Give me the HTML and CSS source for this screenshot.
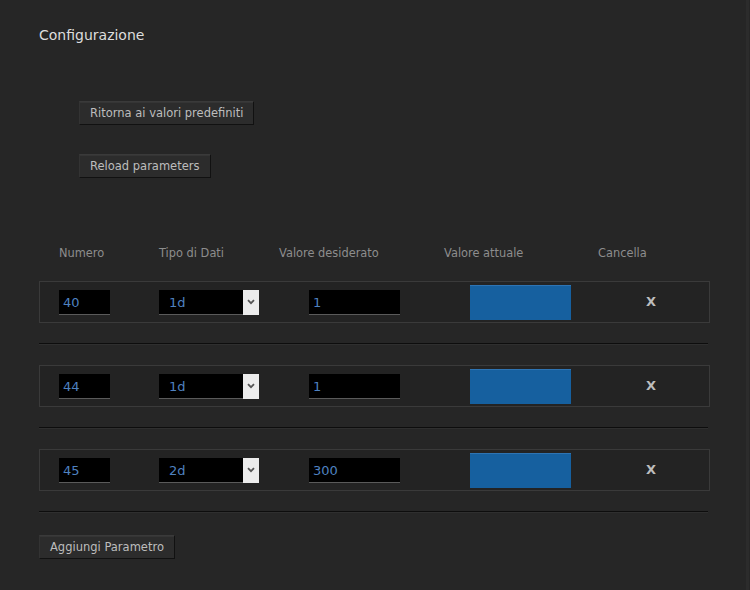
FILE: index.html
```html
<!DOCTYPE html>
<html lang="it">
<head>
<meta charset="utf-8">
<title>Configurazione</title>
<link rel="stylesheet" href="styles.css">
</head>
<body>
<div class="page">
  <h1 class="title">Configurazione</h1>
  <div class="actions">
    <button class="btn">Ritorna ai valori predefiniti</button>
    <button class="btn">Reload parameters</button>
  </div>

  <div class="heads">
    <span>Numero</span>
    <span>Tipo di Dati</span>
    <span>Valore desiderato</span>
    <span>Valore attuale</span>
    <span>Cancella</span>
  </div>

  <div class="param">
    <div class="row">
      <div class="field num">40</div>
      <div class="select"><span class="sel-text">1d</span><span class="arrow"><svg width="8" height="6" viewBox="0 0 8 6"><path d="M1 1.2 L4 4.2 L7 1.2" fill="none" stroke="#555" stroke-width="1.8"/></svg></span></div>
      <div class="field val">1</div>
      <div class="current"></div>
      <div class="del">X</div>
    </div>
    <div class="sep"></div>
  </div>

  <div class="param">
    <div class="row">
      <div class="field num">44</div>
      <div class="select"><span class="sel-text">1d</span><span class="arrow"><svg width="8" height="6" viewBox="0 0 8 6"><path d="M1 1.2 L4 4.2 L7 1.2" fill="none" stroke="#555" stroke-width="1.8"/></svg></span></div>
      <div class="field val">1</div>
      <div class="current"></div>
      <div class="del">X</div>
    </div>
    <div class="sep"></div>
  </div>

  <div class="param">
    <div class="row">
      <div class="field num">45</div>
      <div class="select"><span class="sel-text">2d</span><span class="arrow"><svg width="8" height="6" viewBox="0 0 8 6"><path d="M1 1.2 L4 4.2 L7 1.2" fill="none" stroke="#555" stroke-width="1.8"/></svg></span></div>
      <div class="field val">300</div>
      <div class="current"></div>
      <div class="del">X</div>
    </div>
    <div class="sep"></div>
  </div>

  <button class="btn add">Aggiungi Parametro</button>
</div>
</body>
</html>
```

FILE: styles.css
```css
html, body {
  margin: 0;
  padding: 0;
  background: #262626;
}
body {
  font-family: "DejaVu Sans", sans-serif;
  color: #bbb;
}
.page {
  width: 749px;
  height: 590px;
  box-sizing: border-box;
  padding: 27px 0 0 39px;
  border-right: 3px solid #2c2c2c;
}
.title {
  margin: 0;
  font-size: 14px;
  font-weight: normal;
  line-height: 17px;
  color: #ddd;
}
.actions {
  display: flex;
  flex-direction: column;
  align-items: flex-start;
  gap: 29px;
  margin: 57px 0 0 40px;
}
.btn {
  display: block;
  height: 24px;
  padding: 0 10px;
  background: #2c2c2c;
  border: 1px solid #111;
  border-top-color: #3a3a3a;
  border-left-color: #333;
  box-shadow: inset 0 1px 0 #353535;
  color: #bdbdbd;
  font-family: "DejaVu Sans", sans-serif;
  font-size: 11.5px;
  line-height: 20px;
}
.heads {
  display: grid;
  grid-template-columns: 100px 120px 165px 154px auto;
  padding-left: 20px;
  margin-top: 68px;
  font-size: 11.4px;
  line-height: 14px;
  color: #8d8d8d;
}
.param {
  margin-top: 21px;
  width: 671px;
}
.param + .param {
  margin-top: 20px;
}
.row {
  display: grid;
  grid-template-columns: 100px 150px 161px 178px auto;
  align-items: center;
  height: 40px;
  padding-left: 19px;
  border: 1px solid #3a3a3a;
  background: #232323;
}
.field {
  height: 24px;
  background: #000;
  border-bottom: 1px solid #5a5a5a;
  color: #4f82c0;
  font-size: 13px;
  line-height: 25px;
  padding-left: 4px;
}
.num {
  width: 47px;
}
.val {
  width: 87px;
}
.select {
  display: flex;
  width: 100px;
  height: 24px;
  background: #000;
  border-bottom: 1px solid #5a5a5a;
}
.sel-text {
  flex: 1;
  color: #4f82c0;
  font-size: 13px;
  line-height: 25px;
  padding-left: 10px;
}
.arrow {
  width: 16px;
  height: 25px;
  background: #ececec;
  display: flex;
  align-items: center;
  justify-content: center;
}
.current {
  width: 101px;
  height: 35px;
  box-sizing: border-box;
  background: #16609f;
  border-top: 1px solid #2e74b3;
}
.del {
  font-size: 13px;
  font-weight: bold;
  color: #bdbdbd;
  line-height: 16px;
  margin-left: -2px;
}
.sep {
  margin-top: 20px;
  width: 669px;
  height: 1px;
  background: #0d0d0d;
  border-bottom: 1px solid #2f2f2f;
}
.add {
  margin-top: 22px;
}
```
